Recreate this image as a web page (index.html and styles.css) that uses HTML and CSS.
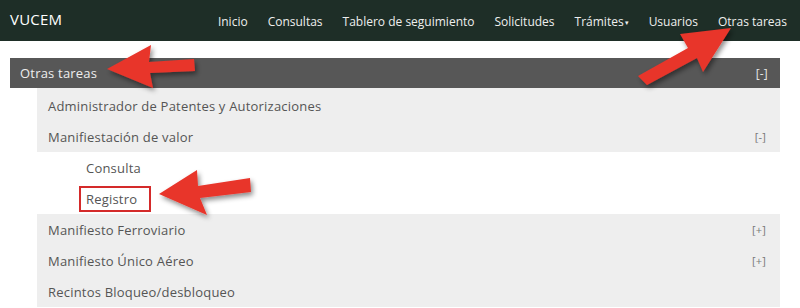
FILE: index.html
```html
<!DOCTYPE html>
<html lang="es">
<head>
    <meta charset="UTF-8">
    <meta name="viewport" content="width=device-width, initial-scale=1.0">
    <title>VUCEM - Otras tareas</title>
    <link rel="stylesheet" href="styles.css">
</head>
<body>
    <header class="topbar">
        <div class="brand">VUCEM</div>
        <nav class="main-nav">
            <a href="#">Inicio</a>
            <a href="#">Consultas</a>
            <a href="#">Tablero de seguimiento</a>
            <a href="#">Solicitudes</a>
            <a href="#">Trámites<span class="caret">&#9662;</span></a>
            <a href="#">Usuarios</a>
            <a href="#">Otras tareas</a>
        </nav>
    </header>

    <main class="menu">
        <div class="menu-title">
            <span>Otras tareas</span>
            <span class="toggle">[-]</span>
        </div>
        <ul class="menu-list">
            <li class="item">Administrador de Patentes y Autorizaciones</li>
            <li class="item">Manifiestación de valor <span class="toggle">[-]</span></li>
            <li class="sub">Consulta</li>
            <li class="sub"><span class="marked">Registro</span></li>
            <li class="item">Manifiesto Ferroviario <span class="toggle">[+]</span></li>
            <li class="item">Manifiesto Único Aéreo <span class="toggle">[+]</span></li>
            <li class="item">Recintos Bloqueo/desbloqueo</li>
        </ul>
    </main>

    <svg class="arrows" width="800" height="308" viewBox="0 0 800 308">
        <defs>
            <filter id="shadow" x="-20%" y="-20%" width="140%" height="140%">
                <feDropShadow dx="2" dy="3" stdDeviation="2.5" flood-color="#000" flood-opacity="0.45"/>
            </filter>
        </defs>
        <g fill="#e8352b" filter="url(#shadow)">
            <!-- arrow to the panel title -->
            <polygon points="107,69 151,45 149,62 194,59 195,71 150,73 153,88"/>
            <!-- arrow to the nav link -->
            <polygon points="731,28 703,72 697,58 647,85 638,76 688,48 680,34"/>
            <!-- arrow to Registro -->
            <polygon points="159,194 197,170 198,186 250,178 251,192 200,198 207,215"/>
        </g>
    </svg>
</body>
</html>
```

FILE: styles.css
```css
body {
    margin: 0;
    padding: 0;
    font-family: 'Open Sans', 'Liberation Sans', sans-serif;
    background-color: #fff;
    color: #555;
    width: 800px;
    height: 308px;
    overflow: hidden;
    position: relative;
}

.topbar {
    background: #1e2e27;
    height: 41px;
    display: flex;
    align-items: center;
    justify-content: space-between;
    padding: 0 13px 0 10px;
    color: #fff;
}

.brand {
    font-size: 15px;
    font-weight: 500;
    letter-spacing: 0.2px;
    margin-top: -4px;
}

.main-nav {
    display: flex;
    gap: 20px;
    margin-top: 2px;
}

.main-nav a {
    color: #eeeeee;
    text-decoration: none;
    font-size: 12px;
}

.caret {
    font-size: 7px;
    margin-left: 1px;
    vertical-align: middle;
}

.menu {
    margin: 17px 20px 0 10px;
}

.menu-title {
    background: #575757;
    color: #eeeeee;
    height: 30px;
    display: flex;
    align-items: center;
    justify-content: space-between;
    padding: 0 12px 0 10px;
    font-size: 13px;
    font-weight: 500;
    letter-spacing: 0.2px;
}

.menu-title .toggle {
    color: #e6e6e6;
    font-size: 12px;
}

.menu-list {
    list-style: none;
    margin: 0;
    padding: 0;
}

.menu-list li {
    height: 31px;
    display: flex;
    align-items: center;
    font-size: 13px;
    letter-spacing: 0.2px;
}

.item {
    background: #eeeeee;
    margin-left: 27px;
    padding: 0 14px 0 11px;
    justify-content: space-between;
}

.item:first-child {
    padding-top: 2px;
}

.sub {
    padding-left: 76px;
}

.toggle {
    color: #777;
    font-size: 11px;
}

.marked {
    border: 2px solid #d42a2a;
    padding: 2px 12px 2px 5px;
    margin-left: -7px;
}

.arrows {
    position: absolute;
    left: 0;
    top: 0;
    pointer-events: none;
}
```
